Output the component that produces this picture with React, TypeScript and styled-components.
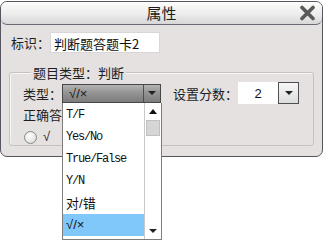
import styled, { createGlobalStyle } from 'styled-components';

const GlobalStyle = createGlobalStyle`
  html {
    overflow: hidden;
  }
  body {
    margin: 0;
    min-height: 240px;
    background: #ffffff;
    font-family: "Noto Sans CJK SC", "Noto Sans", sans-serif;
  }
`;

const options = ['T/F', 'Yes/No', 'True/False', 'Y/N', '对/错', '√/×'];

const Window = styled.div`
  box-sizing: border-box;
  width: 323px;
  height: 156px;
  margin-top: 1px;
  border: 1px solid #55555e;
  border-radius: 7px;
  background: #e4e1e0;
  display: flex;
  flex-direction: column;
`;

const TitleBar = styled.div`
  height: 22px;
  display: grid;
  grid-template-columns: 1fr auto 1fr;
  align-items: center;
  border-bottom: 1px solid #6a6a72;
  border-radius: 6px;
  background: linear-gradient(#fcfcfc, #ececec 55%, #d7d7d7);
`;

const Title = styled.div`
  grid-column: 2;
  font-size: 15px;
  line-height: 22px;
  color: #1c1c1c;
`;

const CloseIcon = styled.svg`
  justify-self: end;
  margin-right: 6px;
`;

const Body = styled.div`
  padding: 7px 8px 0;
`;

const IdRow = styled.div`
  display: flex;
  align-items: center;
  height: 21px;
  padding-left: 2px;
`;

const Label = styled.span<{ $gap?: number }>`
  font-size: 13px;
  line-height: 15px;
  color: #1e1e1e;
  white-space: nowrap;
  margin-left: ${(p) => p.$gap ?? 0}px;
`;

const TextField = styled.div`
  box-sizing: border-box;
  width: 110px;
  height: 21px;
  padding: 3px 0 0 3px;
  background: #fff;
  border: 1px solid #d9d6d6;
  font-size: 13px;
  line-height: 16px;
  color: #111;
`;

const Group = styled.div`
  margin-top: 19px;
  padding: 0 0 1px 13px;
  border: 1px solid #c6c2c1;
  border-radius: 3px;
  box-shadow: inset 1px 1px 0 #f7f6f6;
`;

const Legend = styled.div`
  width: max-content;
  margin: -8px 0 0 8px;
  padding: 0 2px;
  font-size: 13px;
  line-height: 16px;
  color: #1e1e1e;
  background: #e4e1e0;
`;

const FieldRow = styled.div`
  display: flex;
  align-items: center;
  height: 22px;
  margin-top: 1px;
`;

const SelectWrap = styled.div`
  position: relative;
  width: 99px;
  height: 19px;
`;

const Select = styled.div`
  box-sizing: border-box;
  height: 19px;
  display: flex;
  border: 1px solid #474747;
  background: linear-gradient(#b4b4b4, #949494 45%, #7c7c7c);
`;

const SelectValue = styled.div`
  flex: 1;
  padding-left: 6px;
  font-family: "Liberation Sans", "Noto Sans CJK SC", sans-serif;
  font-size: 13px;
  line-height: 17px;
  color: #1a1a1a;
`;

const ArrowBox = styled.div`
  box-sizing: border-box;
  width: 17px;
  display: flex;
  align-items: center;
  justify-content: center;
  border-left: 1px solid #4e4e4e;
`;

const Triangle = styled.div<{ $up?: boolean }>`
  width: 0;
  height: 0;
  border-left: 4px solid transparent;
  border-right: 4px solid transparent;
  ${(p) =>
    p.$up ? 'border-bottom: 5px solid #111;' : 'border-top: 4px solid #222;'}
`;

const ScoreBox = styled.div`
  box-sizing: border-box;
  width: 40px;
  height: 22px;
  background: #fff;
  text-align: center;
  font-family: "Liberation Sans", Arial, sans-serif;
  font-size: 13px;
  line-height: 24px;
  color: #111;
`;

const SpinButton = styled.div`
  box-sizing: border-box;
  width: 21px;
  height: 22px;
  display: flex;
  align-items: center;
  justify-content: center;
  border: 1px solid #4f4f4f;
  background: linear-gradient(#f7f7f7, #dcdcdc);
`;

const AnswerLabel = styled(Label)`
  display: block;
  margin-top: 4px;
  line-height: 14px;
`;

const RadioRow = styled.div`
  display: flex;
  align-items: center;
  gap: 6px;
  height: 14px;
  margin-top: 8px;
  padding-left: 1px;
`;

const Radio = styled.div`
  box-sizing: border-box;
  width: 13px;
  height: 13px;
  border-radius: 50%;
  border: 1px solid #8a8a8a;
  background: radial-gradient(circle at 40% 35%, #ffffff, #e2e2e2 70%, #cfcfcf);
`;

const Mark = styled.span`
  font-family: "Liberation Sans", "Noto Sans CJK SC", sans-serif;
  font-size: 13px;
  line-height: 14px;
  color: #222;
`;

const DropList = styled.div`
  position: absolute;
  z-index: 2;
  top: 100%;
  left: 0;
  box-sizing: border-box;
  width: 100px;
  height: 137px;
  display: flex;
  background: #fff;
  border: 1px solid #7d7d7d;
  border-top: none;
  overflow: hidden;
`;

const Items = styled.div`
  flex: 1;
  padding-top: 1px;
`;

const Item = styled.div<{ $active?: boolean; $latin?: boolean }>`
  height: 22px;
  padding-left: 3px;
  display: flex;
  align-items: center;
  background: ${(p) => (p.$active ? '#80c8fa' : 'transparent')};
  color: #111;
  font-family: ${(p) =>
    p.$latin
      ? '"Liberation Mono", "DejaVu Sans Mono", monospace'
      : '"Liberation Sans", "Noto Sans CJK SC", sans-serif'};
  font-size: ${(p) => (p.$latin ? '12px' : '13px')};
  letter-spacing: ${(p) => (p.$latin ? '-1.2px' : '0')};
`;

const ScrollBar = styled.div`
  width: 16px;
  display: flex;
  flex-direction: column;
  border-left: 1px solid #c9c9c9;
  padding-top: 1px;
`;

const ScrollButton = styled.div`
  height: 16px;
  display: flex;
  align-items: center;
  justify-content: center;
  background: #fff;
`;

const Thumb = styled.div`
  box-sizing: border-box;
  height: 16px;
  margin: 0 1px;
  background: #d6d6d6;
  border: 1px solid #c0c0c0;
`;

const Track = styled.div`
  flex: 1;
`;

const isLatin = (s: string) => /^[A-Za-z/]+$/.test(s);

const App = () => {
  return (
    <>
      <GlobalStyle />
      <Window>
        <TitleBar>
          <Title>属性</Title>
          <CloseIcon width="17" height="16" viewBox="0 0 17 16">
            <path
              d="M3 2.5 L14 13.5 M14 2.5 L3 13.5"
              stroke="#595959"
              strokeWidth="3.6"
              strokeLinecap="round"
            />
          </CloseIcon>
        </TitleBar>
        <Body>
          <IdRow>
            <Label>标识：</Label>
            <TextField>判断题答题卡2</TextField>
          </IdRow>
          <Group>
            <Legend>题目类型：判断</Legend>
            <FieldRow>
              <Label>类型：</Label>
              <SelectWrap>
                <Select>
                  <SelectValue>√/×</SelectValue>
                  <ArrowBox>
                    <Triangle />
                  </ArrowBox>
                </Select>
                <DropList>
                  <Items>
                    {options.map((o) => (
                      <Item key={o} $latin={isLatin(o)} $active={o === '√/×'}>
                        {o}
                      </Item>
                    ))}
                  </Items>
                  <ScrollBar>
                    <ScrollButton>
                      <Triangle $up />
                    </ScrollButton>
                    <Thumb />
                    <Track />
                    <ScrollButton>
                      <Triangle />
                    </ScrollButton>
                  </ScrollBar>
                </DropList>
              </SelectWrap>
              <Label $gap={12}>设置分数：</Label>
              <ScoreBox>2</ScoreBox>
              <SpinButton>
                <Triangle />
              </SpinButton>
            </FieldRow>
            <AnswerLabel>正确答案：</AnswerLabel>
            <RadioRow>
              <Radio />
              <Mark>√</Mark>
            </RadioRow>
          </Group>
        </Body>
      </Window>
    </>
  );
};

export default App;
